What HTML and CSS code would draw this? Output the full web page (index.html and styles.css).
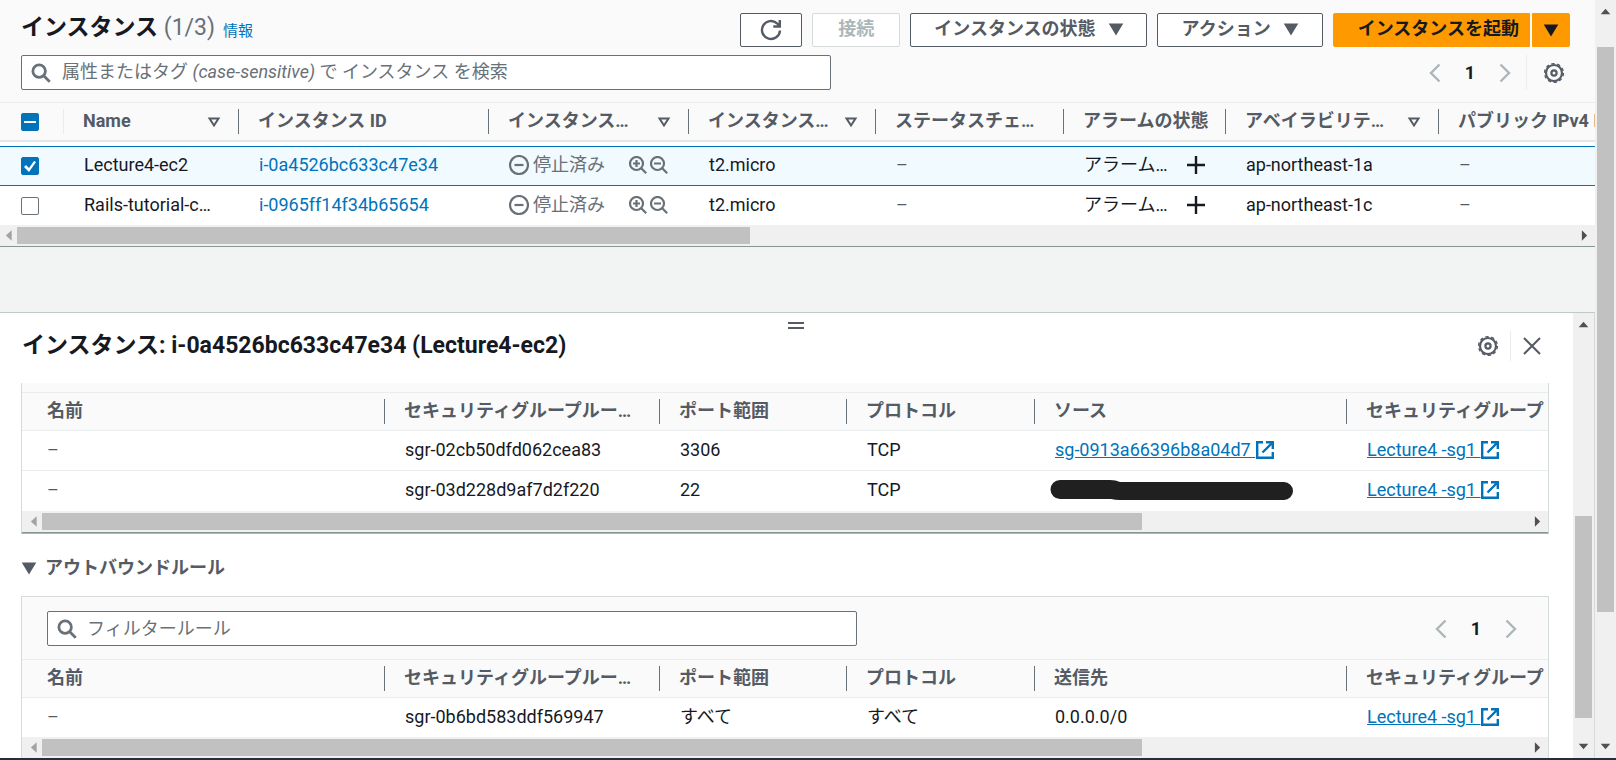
FILE: index.html
```html
<!DOCTYPE html>
<html lang="ja">
<head>
<meta charset="utf-8">
<title>インスタンス</title>
<link rel="stylesheet" href="styles.css">
</head>
<body>
<svg class="defs" aria-hidden="true">
  <symbol id="search" viewBox="0 0 16 16"><circle cx="6.5" cy="6.5" r="5"/><path d="M10.2 10.2 15 15"/></symbol>
  <symbol id="caret" viewBox="0 0 16 16"><path d="M2.5 3.5h11L8 12.500z" fill="currentColor"/></symbol>
  <symbol id="sort" viewBox="0 0 16 16"><path d="M3.500 4.500h9L8 11.500z"/></symbol>
  <symbol id="gear" viewBox="0 0 22 22"><circle cx="11" cy="11" r="8" stroke-width="2.200"/><circle cx="11" cy="11" r="9.400" stroke-width="1.400" stroke-dasharray="3.300 2.606"/><circle cx="11" cy="11" r="2.600" stroke-width="2.200"/></symbol>
  <symbol id="left" viewBox="0 0 16 20"><path d="M12.500 1.500 4 10l8.500 8.500"/></symbol>
  <symbol id="right" viewBox="0 0 16 20"><path d="M3.500 1.500 12 10l-8.500 8.500"/></symbol>
  <symbol id="stopped" viewBox="0 0 20 20"><circle cx="10" cy="10" r="9"/><path d="M5.500 10h9"/></symbol>
  <symbol id="zin" viewBox="0 0 18 18"><circle cx="7.500" cy="7.500" r="6.500"/><path d="m12.200 12.200 5 5M4 7.500h7M7.500 4v7"/></symbol>
  <symbol id="zout" viewBox="0 0 18 18"><circle cx="7.500" cy="7.500" r="6.500"/><path d="m12.200 12.200 5 5M4 7.500h7"/></symbol>
  <symbol id="plus" viewBox="0 0 18 18"><path d="M9 0v18M0 9h18"/></symbol>
  <symbol id="ext" viewBox="0 0 18 18"><path d="M7 1.200H1.200v15.600h15.600V11M10 1.200h6.800V8M16.500 1.500 6.500 11.500"/></symbol>
  <symbol id="tri-l" viewBox="0 0 16 16"><path d="M11 3v10L5.500 8z" fill="currentColor" stroke="none"/></symbol>
  <symbol id="tri-r" viewBox="0 0 16 16"><path d="M5.500 3v10L10.500 8z" fill="currentColor" stroke="none"/></symbol>
  <symbol id="tri-u" viewBox="0 0 16 16"><path d="M3.500 10.500h9L8 5.500z" fill="currentColor" stroke="none"/></symbol>
  <symbol id="tri-d" viewBox="0 0 16 16"><path d="M3.500 5.500h9L8 10.500z" fill="currentColor" stroke="none"/></symbol>
</svg>
<div class="window">
  <div class="app">
    <main class="content">
      <section class="instances">
        <header class="toolbar">
          <div class="toolbar-row">
            <h1 class="title">インスタンス <span class="count">(1/3)</span></h1>
            <a class="info" href="#">情報</a>
            <div class="actions">
              <button class="btn btn-refresh" aria-label="更新"><svg class="icon i22" viewBox="0 0 22 22"><path d="M20 11.500a9 9 0 1 1-3-7.200L19 6.500M19.800 1v6.500h-6.500"/></svg></button>
              <button class="btn btn-connect" disabled>接続</button>
              <button class="btn btn-state">インスタンスの状態<svg class="icon i16"><use href="#caret"/></svg></button>
              <button class="btn btn-action">アクション<svg class="icon i16"><use href="#caret"/></svg></button>
              <div class="split">
                <button class="btn primary btn-launch">インスタンスを起動</button>
                <button class="btn primary btn-more" aria-label="その他"><svg class="icon i16"><use href="#caret"/></svg></button>
              </div>
            </div>
          </div>
          <div class="toolbar-row filter-row">
            <div class="search">
              <svg class="icon i20"><use href="#search"/></svg>
              <input id="find" class="search-input" type="text" placeholder=" ">
              <label class="hint" for="find">属性またはタグ <em>(case-sensitive)</em> で インスタンス を検索</label>
            </div>
            <nav class="pager">
              <button class="plain" aria-label="前へ"><svg class="icon arrow"><use href="#left"/></svg></button>
              <button class="plain page">1</button>
              <button class="plain" aria-label="次へ"><svg class="icon arrow"><use href="#right"/></svg></button>
            </nav>
            <button class="plain settings" aria-label="設定"><svg class="icon i22"><use href="#gear"/></svg></button>
          </div>
        </header>
        <div class="clip">
          <table class="grid main-grid">
            <colgroup><col class="c-check"><col class="c-name"><col class="c-id"><col class="c-status"><col class="c-type"><col class="c-health"><col class="c-alarm"><col class="c-zone"><col class="c-dns"></colgroup>
            <thead>
              <tr>
                <th class="pick"><input type="checkbox" class="box mixed" aria-label="すべて選択"></th>
                <th><div class="head">Name<svg class="icon i16"><use href="#sort"/></svg></div></th>
                <th><div class="head">インスタンス ID</div></th>
                <th><div class="head">インスタンス…<svg class="icon i16"><use href="#sort"/></svg></div></th>
                <th><div class="head">インスタンス…<svg class="icon i16"><use href="#sort"/></svg></div></th>
                <th><div class="head">ステータスチェ…</div></th>
                <th><div class="head">アラームの状態</div></th>
                <th><div class="head">アベイラビリテ…<svg class="icon i16"><use href="#sort"/></svg></div></th>
                <th><div class="head">パブリック IPv4 DNS</div></th>
              </tr>
            </thead>
            <tbody>
              <tr class="selected">
                <td class="pick"><input type="checkbox" class="box" checked aria-label="Lecture4-ec2"></td>
                <td>Lecture4-ec2</td>
                <td><a href="#">i-0a4526bc633c47e34</a></td>
                <td><div class="state"><svg class="icon i20"><use href="#stopped"/></svg><span>停止済み</span><button class="plain zoom" aria-label="絞り込む"><svg class="icon i18"><use href="#zin"/></svg></button><button class="plain zoom" aria-label="除外する"><svg class="icon i18"><use href="#zout"/></svg></button></div></td>
                <td>t2.micro</td>
                <td class="muted">–</td>
                <td><div class="alarm">アラーム…<button class="plain add" aria-label="アラームを追加"><svg class="icon i18"><use href="#plus"/></svg></button></div></td>
                <td>ap-northeast-1a</td>
                <td class="muted">–</td>
              </tr>
              <tr>
                <td class="pick"><input type="checkbox" class="box" aria-label="Rails-tutorial"></td>
                <td>Rails-tutorial-c…</td>
                <td><a href="#">i-0965ff14f34b65654</a></td>
                <td><div class="state"><svg class="icon i20"><use href="#stopped"/></svg><span>停止済み</span><button class="plain zoom" aria-label="絞り込む"><svg class="icon i18"><use href="#zin"/></svg></button><button class="plain zoom" aria-label="除外する"><svg class="icon i18"><use href="#zout"/></svg></button></div></td>
                <td>t2.micro</td>
                <td class="muted">–</td>
                <td><div class="alarm">アラーム…<button class="plain add" aria-label="アラームを追加"><svg class="icon i18"><use href="#plus"/></svg></button></div></td>
                <td>ap-northeast-1c</td>
                <td class="muted">–</td>
              </tr>
            </tbody>
          </table>
        </div>
        <div class="hbar hbar-main"><svg class="tri off"><use href="#tri-l"/></svg><div class="track"><div class="thumb thumb-main"></div></div><svg class="tri"><use href="#tri-r"/></svg></div>
      </section>
      <section class="panel">
        <div class="panel-main">
          <div class="handle"></div>
          <header class="panel-head">
            <h2 class="title">インスタンス: i-0a4526bc633c47e34 (Lecture4-ec2)</h2>
            <button class="plain" aria-label="設定"><svg class="icon i22"><use href="#gear"/></svg></button>
            <button class="plain close" aria-label="閉じる"><svg class="icon i18" viewBox="0 0 18 18"><path d="m1 1 16 16M17 1 1 17"/></svg></button>
          </header>
          <div class="panel-body">
            <div class="card inbound">
              <div class="strip"></div>
              <div class="clip">
                <table class="grid rules">
                  <colgroup><col class="r-name"><col class="r-id"><col class="r-port"><col class="r-proto"><col class="r-src"><col class="r-group"></colgroup>
                  <thead><tr><th>名前</th><th><div class="head">セキュリティグループルー…</div></th><th><div class="head">ポート範囲</div></th><th><div class="head">プロトコル</div></th><th><div class="head">ソース</div></th><th>セキュリティグループ</th></tr></thead>
                  <tbody>
                    <tr><td class="muted">–</td><td>sgr-02cb50dfd062cea83</td><td>3306</td><td>TCP</td><td><a class="out" href="#">sg-0913a66396b8a04d7 <svg class="icon i18"><use href="#ext"/></svg></a></td><td><a class="out" href="#">Lecture4 -sg1 <svg class="icon i18"><use href="#ext"/></svg></a></td></tr>
                    <tr><td class="muted">–</td><td>sgr-03d228d9af7d2f220</td><td>22</td><td>TCP</td><td><svg class="redacted" viewBox="0 0 245 21"><path d="M10 0h50q6 0 10 2h164a9 9 0 0 1 0 18H70q-5 0-9-1H10A9 9 0 0 1 10 0z"/></svg></td><td><a class="out" href="#">Lecture4 -sg1 <svg class="icon i18"><use href="#ext"/></svg></a></td></tr>
                  </tbody>
                </table>
              </div>
              <div class="hbar"><svg class="tri off"><use href="#tri-l"/></svg><div class="track"><div class="thumb thumb-rules"></div></div><svg class="tri"><use href="#tri-r"/></svg></div>
            </div>
            <h3 class="section-title"><button class="plain toggle"><svg class="icon i16"><use href="#caret"/></svg>アウトバウンドルール</button></h3>
            <div class="card outbound">
              <div class="card-filter">
                <div class="search">
                  <svg class="icon i20"><use href="#search"/></svg>
                  <input class="search-input" type="text" placeholder="フィルタールール" aria-label="フィルタールール">
                </div>
                <nav class="pager">
                  <button class="plain" aria-label="前へ"><svg class="icon arrow"><use href="#left"/></svg></button>
                  <button class="plain page">1</button>
                  <button class="plain" aria-label="次へ"><svg class="icon arrow"><use href="#right"/></svg></button>
                </nav>
              </div>
              <div class="clip">
                <table class="grid rules">
                  <colgroup><col class="r-name"><col class="r-id"><col class="r-port"><col class="r-proto"><col class="r-src"><col class="r-group"></colgroup>
                  <thead><tr><th>名前</th><th><div class="head">セキュリティグループルー…</div></th><th><div class="head">ポート範囲</div></th><th><div class="head">プロトコル</div></th><th><div class="head">送信先</div></th><th>セキュリティグループ</th></tr></thead>
                  <tbody>
                    <tr><td class="muted">–</td><td>sgr-0b6bd583ddf569947</td><td>すべて</td><td>すべて</td><td>0.0.0.0/0</td><td><a class="out" href="#">Lecture4 -sg1 <svg class="icon i18"><use href="#ext"/></svg></a></td></tr>
                  </tbody>
                </table>
              </div>
              <div class="hbar"><svg class="tri off"><use href="#tri-l"/></svg><div class="track"><div class="thumb thumb-rules"></div></div><svg class="tri"><use href="#tri-r"/></svg></div>
            </div>
          </div>
        </div>
        <div class="vbar"><svg class="tri"><use href="#tri-u"/></svg><div class="vtrack"><div class="vthumb vthumb-panel"></div></div><svg class="tri"><use href="#tri-d"/></svg></div>
      </section>
    </main>
    <div class="vbar page-bar"><svg class="tri"><use href="#tri-u"/></svg><div class="vtrack"><div class="vthumb vthumb-page"></div></div><svg class="tri"><use href="#tri-d"/></svg></div>
  </div>
</div>
</body>
</html>
```
FILE: styles.css
```css
* { box-sizing: border-box; }

body {
  margin: 0;
  font: 18px/24px Roboto, "Noto Sans CJK JP", sans-serif;
  color: #16191f;
  background: #f2f3f3;
}

button, input { font: inherit; color: inherit; }
h1, h2, h3 { margin: 0; }
a { color: #0073bb; text-decoration: none; }

.defs { display: none; }

.window {
  height: 100vh;
  overflow: hidden;
  border-bottom: 2px solid #232f3e;
}

.app { display: flex; height: 100%; }

.content {
  flex: 1;
  min-width: 0;
  display: flex;
  flex-direction: column;
  gap: 65px;
}

/* Icons */
.icon {
  flex: none;
  fill: none;
  stroke: currentColor;
  stroke-width: 2;
}
.i16 { width: 16px; height: 16px; }
.i18 { width: 18px; height: 18px; }
.i20 { width: 20px; height: 20px; }
.i22 { width: 22px; height: 22px; stroke-width: 2.4; }
.arrow { width: 16px; height: 20px; stroke-width: 2.4; }

/* Buttons */
.plain {
  display: flex;
  align-items: center;
  padding: 0;
  border: 0;
  background: none;
  color: #545b64;
}

.btn {
  display: flex;
  align-items: center;
  justify-content: center;
  gap: 12px;
  height: 34px;
  padding: 0 22px 2px;
  border: 1px solid #545b64;
  border-radius: 2px;
  background: #fff;
  color: #545b64;
  font-weight: 700;
  line-height: 24px;
  white-space: nowrap;
}
.btn:disabled { border-color: #d5dbdb; color: #aab7b8; }
.btn-refresh { padding: 0 19px; }
.btn-connect { padding: 0 25px 2px; }
.btn-state { padding: 0 22px 2px 23px; }
.btn-action { padding: 0 23px 2px 24px; }
.primary { border-color: #ff9900; background: #ff9900; color: #16191f; }
.btn-launch { padding: 0 10px 2px 24px; border-radius: 2px 0 0 2px; }
.btn-more { padding: 0 10px; border-radius: 0 2px 2px 0; }
.split { display: flex; gap: 2px; }

/* Toolbar */
.toolbar {
  display: flex;
  flex-direction: column;
  gap: 8px;
  padding: 13px 25px 12px 21px;
  background: #fafafa;
}
.toolbar-row { display: flex; align-items: center; }
.title { font-size: 23px; line-height: 28px; font-weight: 700; }
.toolbar .title { margin-bottom: 4px; }
.count { font-weight: 400; color: #687078; }
.info { margin: 2px 0 0 8px; font-size: 15px; }
.actions { display: flex; gap: 10px; margin-left: auto; }

.search {
  position: relative;
  display: flex;
  align-items: center;
  gap: 10px;
  width: 810px;
  height: 35px;
  padding: 0 9px;
  border: 1px solid #687078;
  border-radius: 2px;
  background: #fff;
  color: #687078;
}
.search .icon { stroke-width: 2.2; }
.search-input {
  flex: 1;
  min-width: 0;
  padding: 0;
  border: 0;
  outline: 0;
  background: none;
}
.search-input::placeholder { color: #687078; opacity: 1; }
.hint {
  position: absolute;
  left: 40px;
  padding-bottom: 2px;
  white-space: nowrap;
  pointer-events: none;
}
.search-input:not(:placeholder-shown) + .hint { display: none; }

.pager { display: flex; align-items: center; margin-left: auto; color: #aab7b8; }
.pager .plain { color: #aab7b8; }
.pager .page { justify-content: center; width: 54px; color: #16191f; font-weight: 700; }
.settings {
  height: 35px;
  margin-left: 13px;
  padding: 0 5px 0 16px;
  border-left: 1px solid #eaeded;
}

/* Tables */
.instances { background: #fff; }
.clip { overflow: hidden; }
.grid {
  table-layout: fixed;
  border-collapse: separate;
  border-spacing: 0;
  white-space: nowrap;
}
.grid th {
  height: 40px;
  padding: 0;
  border-top: 1px solid #eaeded;
  border-bottom: 1px solid #eaeded;
  background: #fafafa;
  color: #545b64;
  font-weight: 700;
  text-align: left;
}
.grid td { height: 39px; padding: 0 0 2px 20px; }
.head {
  display: flex;
  align-items: center;
  justify-content: space-between;
  height: 25px;
  padding: 0 16px 2px 19px;
  border-right: 1px solid #687078;
}
.head .icon { margin-top: 2px; }
.muted { color: #545b64; }

.main-grid { width: 1739px; }
.main-grid thead th { border-bottom: 2px solid #e3e6e6; }
.main-grid tbody::before { content: ""; display: block; height: 4px; }
.c-check { width: 64px; }
.c-name { width: 175px; }
.c-id { width: 250px; }
.c-status { width: 200px; }
.c-type { width: 187px; }
.c-health { width: 188px; }
.c-alarm { width: 162px; }
.c-zone { width: 213px; }
.c-dns { width: 300px; }
.selected td {
  height: 40px;
  border-top: 1px solid #0073bb;
  border-bottom: 1px solid #0073bb;
  background: #f1faff;
}
.grid .pick { padding: 0 0 0 21px; }
.grid th.pick { background: #fafafa linear-gradient(#eaeded, #eaeded) right center / 1px 25px no-repeat; }

.box {
  appearance: none;
  display: block;
  width: 18px;
  height: 18px;
  margin: 0;
  border: 1px solid #687078;
  border-radius: 2px;
  background: #fff;
}
.box.mixed, .box:checked { border-color: #0073bb; background: #0073bb; }
.box.mixed::before {
  content: "";
  display: block;
  width: 12px;
  height: 2px;
  margin: 7px 2px;
  background: #fff;
}
.box:checked::before {
  content: "";
  display: block;
  width: 16px;
  height: 16px;
  background: #fff;
  clip-path: polygon(2px 9px, 4px 7px, 7px 10px, 12px 3px, 14px 4px, 7px 14px);
}

.state { display: flex; align-items: center; color: #687078; }
.state span { margin: 0 24px 0 4px; }
.state .zoom { color: #687078; margin-right: 3px; }
.state .icon { stroke-width: 2.2; }
.alarm { display: flex; align-items: center; gap: 19px; }
.add { color: #16191f; }
.add .icon { stroke-width: 2.4; }

/* Scroll bars */
.hbar {
  display: flex;
  align-items: center;
  height: 22px;
  padding: 0 2px 0 3px;
  background: #f0f0f0;
  border-bottom: 1px solid #879596;
}
.hbar-main { padding: 0 2px 0 0; }
.tri { flex: none; width: 17px; height: 17px; color: #505050; }
.off { color: #a3a3a3; }
.track { flex: 1; }
.thumb { height: 17px; background: #c1c1c1; }
.thumb-main { width: 47%; }
.thumb-rules { width: 74%; }
.vbar {
  display: flex;
  flex-direction: column;
  align-items: center;
  width: 21px;
  padding: 3px 0;
  background: #f0f0f0;
}
.vtrack { flex: 1; width: 17px; }
.vthumb { background: #c1c1c1; }
.vthumb-page { height: 565px; margin-top: 27px; }
.vthumb-panel { height: 202px; margin-top: 183px; }

/* Split panel */
.panel {
  flex: 1;
  min-height: 0;
  display: flex;
  border-top: 1px solid #c1c8c9;
  border-right: 1px solid #d5dbdb;
  background: #fff;
}
.panel-main { flex: 1; min-width: 0; display: flex; flex-direction: column; }
.handle {
  flex: none;
  align-self: center;
  width: 16px;
  height: 7px;
  margin: 9px 0 0 18px;
  border: solid #545b64;
  border-width: 2px 0;
}
.panel-head {
  display: flex;
  align-items: center;
  gap: 11px;
  padding: 2px 32px 22px 22px;
}
.panel-head .title { margin-right: auto; }
.close { height: 30px; padding-left: 12px; border-left: 1px solid #eaeded; }
.panel-body { flex: 1; min-height: 0; overflow: hidden; padding: 0 24px 0 21px; }
.card { border: 1px solid #d5dbdb; }
.inbound { border-top: 0; border-bottom-color: #aab7b8; }
.strip { height: 9px; background: #fafafa; }
.section-title { padding: 22px 0 16px; font-size: 18px; }
.toggle { gap: 8px; font-weight: 700; }
.card-filter {
  display: flex;
  align-items: center;
  padding: 14px 29px 13px 25px;
  background: #fafafa;
}
.rules { width: 1588px; }
.rules th { height: 39px; }
.rules th:first-child {
  padding: 0 0 2px 25px;
  background: #fafafa linear-gradient(#687078, #687078) right center / 1px 25px no-repeat;
}
.rules th:last-child { padding: 0 0 2px 19px; }
.rules td:first-child { padding-left: 25px; }
.rules tbody tr + tr td { height: 41px; border-top: 1px solid #eaeded; }
.r-name { width: 363px; }
.r-id { width: 275px; }
.r-port { width: 187px; }
.r-proto { width: 188px; }
.r-src { width: 312px; }
.r-group { width: 263px; }
.out { text-decoration: underline; }
.out .icon { vertical-align: -3px; margin-left: 1px; stroke-width: 2.4; }
.redacted { display: block; width: 245px; height: 21px; margin-left: -5px; fill: #202020; }
```
